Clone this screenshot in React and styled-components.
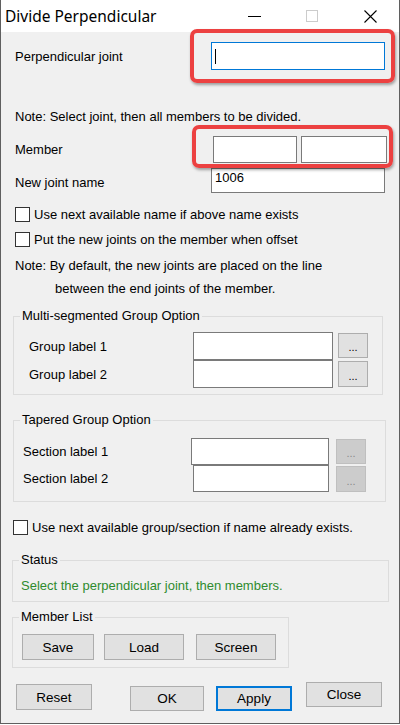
import React from 'react';
import styled, { createGlobalStyle } from 'styled-components';

const GlobalStyle = createGlobalStyle`
  body {
    margin: 0;
    font-family: "Liberation Sans", Arial, sans-serif;
    font-size: 13px;
    color: #000;
  }
`;

const Window = styled.div`
  width: 400px;
  height: 724px;
  box-sizing: border-box;
  border: 1px solid #5f5f5f;
  border-top: none;
  background: #f0f0f0;
  display: flex;
  flex-direction: column;
  overflow: hidden;
`;

const TitleBar = styled.div`
  height: 32px;
  flex-shrink: 0;
  background: #fff;
  display: flex;
  align-items: center;
`;

const Title = styled.div`
  flex: 1;
  padding-left: 4px;
  font-family: "Noto Sans", "Liberation Sans", sans-serif;
  font-size: 15.5px;
  line-height: 32px;
`;

const Caption = styled.div`
  width: 58px;
  height: 32px;
  display: flex;
  align-items: center;
  justify-content: center;
`;

const Body = styled.div`
  flex: 1;
  display: flex;
  flex-direction: column;
`;

const Row = styled.div`
  display: flex;
  align-items: center;
  flex-shrink: 0;
  margin-top: ${p => p.$top || 0}px;
  padding-left: ${p => p.$left || 0}px;
  height: ${p => (p.$h ? `${p.$h}px` : 'auto')};
`;

const Label = styled.div`
  width: ${p => p.$w}px;
  flex-shrink: 0;
  line-height: 16px;
  padding-top: ${p => p.$pt ?? 1}px;
  white-space: nowrap;
`;

const Text = styled.div`
  line-height: 16px;
  white-space: nowrap;
  margin-top: ${p => p.$top || 0}px;
  padding-left: ${p => p.$left || 0}px;
  color: ${p => p.$color || '#000'};
`;

const Field = styled.div`
  box-sizing: border-box;
  width: ${p => p.$w}px;
  height: ${p => p.$h}px;
  background: #fff;
  border: 1px solid ${p => (p.$focus ? '#0078d7' : '#7a7a7a')};
  padding: 0 3px;
  display: flex;
  align-items: ${p => (p.$top ? 'flex-start' : 'center')};
  line-height: 17px;
  margin-left: ${p => p.$ml || 0}px;
`;

const Caret = styled.span`
  width: 1px;
  height: 15px;
  background: #000;
`;

const Highlight = styled.div`
  position: relative;
  display: flex;
  gap: ${p => p.$gap || 0}px;
`;

const RedFrame = styled.div`
  position: absolute;
  left: ${p => p.$l}px;
  top: ${p => p.$t}px;
  right: ${p => p.$r}px;
  bottom: ${p => p.$b}px;
  border: 4px solid #ec4141;
  border-radius: 7px;
  box-shadow: 1px 2px 3px rgba(0, 0, 0, 0.35);
  pointer-events: none;
`;

const Check = styled.span`
  box-sizing: border-box;
  width: 15px;
  height: 15px;
  border: 1px solid #333;
  background: #fff;
  margin-right: 4px;
  flex-shrink: 0;
`;

const Group = styled.fieldset`
  box-sizing: border-box;
  margin: ${p => p.$top}px 0 0 ${p => p.$left}px;
  width: ${p => p.$w}px;
  padding: 0 0 ${p => p.$pb}px;
  border: 1px solid #dcdcdc;
  min-width: 0;
  flex-shrink: 0;
`;

const Legend = styled.legend`
  margin-left: 6px;
  padding: 0 2px;
  line-height: 16px;
`;

const Button = styled.div`
  box-sizing: border-box;
  width: ${p => p.$w}px;
  height: ${p => p.$h || 26}px;
  margin-left: ${p => p.$ml || 0}px;
  margin-top: ${p => p.$mt || 0}px;
  align-self: flex-start;
  background: ${p => (p.$disabled ? '#cccccc' : '#e1e1e1')};
  border: ${p => (p.$primary ? '2px solid #0078d7' : `1px solid ${p.$disabled ? '#bfbfbf' : '#adadad'}`)};
  color: ${p => (p.$disabled ? '#8a8a8a' : '#000')};
  font-size: 13.5px;
  display: flex;
  align-items: center;
  justify-content: center;
  flex-shrink: 0;
`;

const DotText = styled.span`
  font-size: 11px;
  margin-top: 3px;
`;

const ButtonRow = styled.div`
  display: flex;
  align-items: flex-start;
  margin-top: ${p => p.$top || 0}px;
  padding-left: ${p => p.$left || 0}px;
`;

const Dots = ({ disabled, ...rest }) => (
  <Button $w={30} $disabled={disabled} {...rest}>
    <DotText>...</DotText>
  </Button>
);

export default function App() {
  return (
    <>
      <GlobalStyle />
      <Window>
        <TitleBar>
          <Title>Divide Perpendicular</Title>
          <Caption>
            <svg width="13" height="13" viewBox="0 0 13 13">
              <line x1="0" y1="6.5" x2="13" y2="6.5" stroke="#000" strokeWidth="1" />
            </svg>
          </Caption>
          <Caption>
            <svg width="13" height="13" viewBox="0 0 13 13">
              <rect x="0.5" y="0.5" width="11" height="11" fill="none" stroke="#cccccc" strokeWidth="1" />
            </svg>
          </Caption>
          <Caption>
            <svg width="13" height="13" viewBox="0 0 13 13">
              <path d="M0.5 0.5 L12.5 12.5 M12.5 0.5 L0.5 12.5" stroke="#000" strokeWidth="1.1" />
            </svg>
          </Caption>
        </TitleBar>

        <Body>
          <Row $top={10} $left={14} $h={28}>
            <Label $w={196}>Perpendicular joint</Label>
            <Highlight>
              <Field $w={174} $h={28} $focus>
                <Caret />
              </Field>
              <RedFrame $l={-21} $t={-13} $r={-10} $b={-13} />
            </Highlight>
          </Row>

          <Text $top={39} $left={14}>Note: Select joint, then all members to be divided.</Text>

          <Row $top={11} $left={14} $h={27}>
            <Label $w={198}>Member</Label>
            <Highlight $gap={4}>
              <Field $w={84} $h={27} />
              <Field $w={86} $h={27} />
              <RedFrame $l={-21} $t={-11} $r={-6} $b={-5} />
            </Highlight>
          </Row>

          <Row $top={5} $left={14} $h={25}>
            <Label $w={196} $pt={4}>New joint name</Label>
            <Field $w={174} $h={25} $top>1006</Field>
          </Row>

          <Row $top={14} $left={14} $h={15}>
            <Check />
            <span>Use next available name if above name exists</span>
          </Row>
          <Row $top={10} $left={14} $h={15}>
            <Check />
            <span>Put the new joints on the member when offset</span>
          </Row>

          <Text $top={11} $left={14}>Note: By default, the new joints are placed on the line</Text>
          <Text $top={7} $left={54}>between the end joints of the member.</Text>

          <Group $top={11} $left={12} $w={370} $pb={6}>
            <Legend>Multi-segmented Group Option</Legend>
            <Row $top={8} $left={15} $h={28}>
              <Label $w={164}>Group label 1</Label>
              <Field $w={140} $h={28} />
              <Dots $ml={5} $mt={1} $h={25} />
            </Row>
            <Row $left={15} $h={28}>
              <Label $w={164}>Group label 2</Label>
              <Field $w={140} $h={28} />
              <Dots $ml={5} $mt={1} />
            </Row>
          </Group>

          <Group $top={17} $left={12} $w={373} $pb={9}>
            <Legend>Tapered Group Option</Legend>
            <Row $top={10} $left={9} $h={27}>
              <Label $w={168}>Section label 1</Label>
              <Field $w={138} $h={27} />
              <Dots disabled $ml={7} $mt={1} $h={25} />
            </Row>
            <Row $left={9} $h={27}>
              <Label $w={170}>Section label 2</Label>
              <Field $w={136} $h={27} />
              <Dots disabled $ml={7} $mt={1} />
            </Row>
          </Group>

          <Row $top={18} $left={12} $h={15}>
            <Check />
            <span>Use next available group/section if name already exists.</span>
          </Row>

          <Group $top={17} $left={11} $w={377} $pb={7}>
            <Legend>Status</Legend>
            <Text $top={10} $left={8} $color="#2e8b2e">Select the perpendicular joint, then members.</Text>
          </Group>

          <Group $top={7} $left={11} $w={277} $pb={7}>
            <Legend>Member List</Legend>
            <ButtonRow $top={9} $left={9}>
              <Button $w={72}>Save</Button>
              <Button $w={80} $ml={10}>Load</Button>
              <Button $w={80} $ml={12}>Screen</Button>
            </ButtonRow>
          </Group>

          <ButtonRow $top={14} $left={15}>
            <Button $w={76} $mt={2}>Reset</Button>
            <Button $w={74} $h={25} $ml={38} $mt={4}>OK</Button>
            <Button $w={76} $h={25} $ml={12} $mt={4} $primary>Apply</Button>
            <Button $w={76} $h={25} $ml={14}>Close</Button>
          </ButtonRow>
        </Body>
      </Window>
    </>
  );
}
